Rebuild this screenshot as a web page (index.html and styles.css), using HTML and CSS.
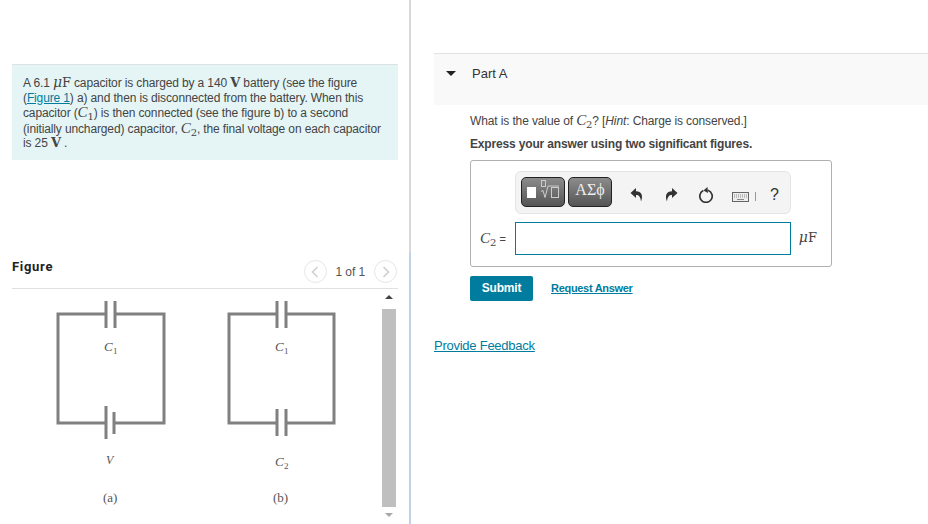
FILE: index.html
```html
<!DOCTYPE html>
<html lang="en">
<head>
    <meta charset="UTF-8">
    <title>Part A</title>
    <link rel="stylesheet" href="styles.css">
</head>
<body>
    <div class="left-pane">
        <div class="intro">
            A 6.1 <span class="mu">μ</span><span class="unit">F</span> capacitor is charged by a 140 <span class="unit bold">V</span> battery (see the figure<br>
            (<a href="#" class="link">Figure 1</a>) a) and then is disconnected from the battery. When this<br>
            capacitor (<span class="math">C</span><sub>1</sub>) is then connected (see the figure b) to a second<br>
            (initially uncharged) capacitor, <span class="math">C</span><sub>2</sub>, the final voltage on each capacitor<br>
            is 25 <span class="unit bold">V</span> .
        </div>

        <div class="figure-head">
            <span class="figure-title">Figure</span>
            <div class="pager">
                <span class="page-btn">
                    <svg width="8" height="12" viewBox="0 0 8 12"><path d="M6.5 1 1.5 6l5 5" fill="none" stroke="#d0d0d0" stroke-width="1.6"/></svg>
                </span>
                <span class="page-count">1 of 1</span>
                <span class="page-btn">
                    <svg width="8" height="12" viewBox="0 0 8 12"><path d="M1.5 1l5 5-5 5" fill="none" stroke="#d0d0d0" stroke-width="1.6"/></svg>
                </span>
            </div>
        </div>

        <div class="figure-body">
            <svg class="circuit" width="370" height="235" viewBox="12 289 370 235">
                <g fill="none" stroke="#808080" stroke-width="3">
                    <path d="M106 314H58V423H106M115 314H164V423H114"/>
                    <path d="M106 301V328M115 301V328M106 406V439M114 412V434"/>
                    <path d="M277 314H229V423H277M286 314H334V423H286"/>
                    <path d="M277 301V328M286 301V328M277 409V436M286 409V436"/>
                </g>
                <g class="fig-label">
                    <text x="104" y="351" font-style="italic" font-size="13">C</text>
                    <text x="113" y="354" font-size="9">1</text>
                    <text x="275" y="351" font-style="italic" font-size="13">C</text>
                    <text x="284" y="354" font-size="9">1</text>
                    <text x="106" y="464" font-style="italic" font-size="12">V</text>
                    <text x="275" y="466" font-style="italic" font-size="13">C</text>
                    <text x="284" y="469" font-size="9">2</text>
                    <text x="103" y="502" font-size="13">(a)</text>
                    <text x="273" y="502" font-size="13">(b)</text>
                </g>
            </svg>
            <div class="scrollbar">
                <span class="arrow-up"></span>
                <span class="thumb"></span>
                <span class="arrow-down"></span>
            </div>
        </div>
    </div>

    <div class="divider"></div>

    <div class="right-pane">
        <div class="part-head">
            <span class="caret"></span>
            <span class="part-title">Part A</span>
        </div>

        <div class="part-body">
            <p class="question">What is the value of <span class="math">C</span><sub>2</sub>? [<i>Hint</i>: Charge is conserved.]</p>
            <p class="instruction">Express your answer using two significant figures.</p>

            <div class="answer-box">
                <div class="toolbar">
                    <span class="tool-btn">
                        <svg width="36" height="24" viewBox="0 0 36 24">
                            <rect x="2" y="8" width="9" height="11" fill="#fff"/>
                            <path d="M16 12.500l2-1 2 7 3-11.500h11" fill="none" stroke="#ccc"/>
                            <rect x="16.500" y="1.500" width="4" height="6" fill="none" stroke="#ccc"/>
                            <rect x="26.500" y="8.500" width="7" height="10" fill="none" stroke="#ccc"/>
                        </svg>
                    </span>
                    <span class="tool-btn greek">ΑΣϕ</span>
                    <div class="tool-icons">
                        <svg width="14" height="14" viewBox="0 0 14 14"><path d="M6 0 .5 5 6 10V7C9 7 10.500 8.800 11 13.500 13.300 8 11.800 3.300 6 3.300Z" fill="#333"/></svg>
                        <svg width="14" height="14" viewBox="0 0 14 14"><path d="M8 0l5.500 5L8 10V7C5 7 3.500 8.800 3 13.500.7 8 2.200 3.300 8 3.300Z" fill="#333"/></svg>
                        <svg width="16" height="16" viewBox="0 0 16 16"><path d="M5.300 3.600A6.200 6.200 0 1 0 10 3.300" fill="none" stroke="#333" stroke-width="1.700"/><path d="M9.500 0 5.500 3.500 10 6Z" fill="#333"/></svg>
                        <span class="keys">
                            <svg width="17" height="10" viewBox="0 0 17 10"><rect x=".5" y=".5" width="16" height="9" fill="#eee" stroke="#666"/><path d="M2 3h13M2 5h13" stroke="#888" stroke-dasharray="1 1"/><path d="M5 7.500h7" stroke="#888"/></svg>
                            <span class="keys-sep"></span>
                        </span>
                        <span class="help">?</span>
                    </div>
                </div>
                <div class="answer-row">
                    <span class="answer-label"><span class="math">C</span><sub>2</sub> =</span>
                    <input class="answer-input" type="text">
                    <span class="answer-unit"><span class="mu">μ</span><span class="unit">F</span></span>
                </div>
            </div>

            <div class="actions">
                <button class="submit-btn">Submit</button>
                <a href="#" class="request-link">Request Answer</a>
            </div>
        </div>

        <a href="#" class="feedback-link">Provide Feedback</a>
    </div>
</body>
</html>
```

FILE: styles.css
```css
* {
    margin: 0;
    padding: 0;
    box-sizing: border-box;
}

body {
    font-family: "Liberation Sans", Arial, sans-serif;
    font-size: 12px;
    color: #444;
    background: #fff;
    display: flex;
    height: 524px;
    width: 928px;
    overflow: hidden;
}

a {
    color: #007c9e;
}

sub {
    font-size: 10px;
    line-height: 0;
    font-family: "DejaVu Serif", serif;
}

.math {
    font-family: "Liberation Serif", serif;
    font-style: italic;
    font-size: 15px;
}

.mu {
    font-family: "DejaVu Serif", serif;
    font-style: italic;
    font-size: 14px;
    line-height: 0;
}

.unit {
    font-family: "DejaVu Serif", serif;
    font-size: 13px;
    line-height: 0;
}

.bold {
    font-weight: bold;
}

/* left side */
.left-pane {
    width: 409px;
    padding: 64px 11px 0 12px;
    flex-shrink: 0;
}

.intro {
    height: 96px;
    background: #e5f5f6;
    border-top: 1px solid #dde3e3;
    padding: 11px 0 0 11px;
    line-height: 14.500px;
    letter-spacing: -.13px;
    white-space: nowrap;
}

.intro .link {
    text-decoration: underline;
}

.figure-head {
    margin-top: 93px;
    height: 36px;
    display: flex;
    justify-content: space-between;
    align-items: flex-start;
    border-bottom: 1px solid #e0e0e0;
}

.figure-title {
    font-family: Roboto, sans-serif;
    font-weight: bold;
    font-size: 13px;
    letter-spacing: .7px;
    line-height: 18px;
    margin-top: 5px;
    color: #222;
}

.pager {
    display: flex;
    align-items: center;
    gap: 9px;
    margin: 7px 1px 0 0;
}

.page-count {
    color: #555;
    letter-spacing: -.1px;
}

.page-btn {
    width: 23px;
    height: 23px;
    border: 1px solid #e6e6e6;
    border-radius: 50%;
    display: flex;
    align-items: center;
    justify-content: center;
}

.figure-body {
    display: flex;
}

.circuit {
    display: block;
    flex-shrink: 0;
}

.fig-label text {
    font-family: "Liberation Serif", serif;
    fill: #555;
}

.scrollbar {
    width: 14px;
    height: 235px;
    display: flex;
    flex-direction: column;
    align-items: center;
}

.arrow-up {
    margin-top: 6px;
    border: 4px solid transparent;
    border-top: 0;
    border-bottom: 4px solid #444;
}

.thumb {
    width: 14px;
    height: 198px;
    margin-top: 10px;
    background: #bfbfbf;
}

.arrow-down {
    margin-top: 6px;
    border: 4px solid transparent;
    border-bottom: 0;
    border-top: 4px solid #a8a8a8;
}

.divider {
    width: 2px;
    height: 524px;
    flex-shrink: 0;
    background: linear-gradient(#d8d8d8 252px, #c0d2e4 252px);
}

/* right side */
.right-pane {
    flex: 1;
    padding: 53px 0 0 23px;
}

.part-head {
    height: 52px;
    background: #f9f9f9;
    border-top: 1px solid #e2e2e2;
    display: flex;
    align-items: flex-start;
    padding: 11px 0 0 12px;
}

.caret {
    margin-top: 6px;
    border: 5px solid transparent;
    border-bottom: 0;
    border-top: 5px solid #222;
}

.part-title {
    margin-left: 16px;
    margin-top: 1px;
    font-size: 13px;
    color: #333;
}

.part-body {
    padding: 7px 0 0 36px;
}

.question {
    line-height: 17px;
    letter-spacing: -.12px;
}

.instruction {
    margin-top: 7px;
    line-height: 15px;
    font-weight: bold;
    letter-spacing: -.16px;
}

.answer-box {
    margin-top: 8px;
    width: 362px;
    height: 107px;
    border: 1px solid #b0b0b0;
    border-radius: 3px;
    padding: 10px 40px 0 44px;
}

.toolbar {
    height: 43px;
    background: #f4f4f4;
    border: 1px solid #e4e4e4;
    border-radius: 6px;
    display: flex;
    align-items: flex-start;
    gap: 3px;
    padding: 5px 0 0 5px;
}

.tool-btn {
    width: 44px;
    height: 30px;
    border: 1px solid #222;
    border-radius: 5px;
    background: linear-gradient(#8c8c8c, #555);
    display: flex;
    align-items: flex-start;
    justify-content: center;
    padding-top: 1px;
}

.greek {
    font-family: "Liberation Serif", serif;
    font-size: 16px;
    color: #eee;
    padding-top: 3px;
}

.tool-icons {
    margin-top: 6px;
    margin-left: 15px;
    height: 24px;
    display: flex;
    align-items: center;
    gap: 20px;
}

.keys {
    display: flex;
    align-items: center;
    gap: 6px;
    margin-left: -2px;
    margin-top: 3px;
}

.keys-sep {
    width: 1px;
    height: 9px;
    background: #999;
}

.help {
    font-size: 16px;
    color: #333;
    margin-left: -6px;
}

.answer-row {
    position: relative;
    margin-top: 8px;
    height: 33px;
}

.answer-label {
    position: absolute;
    left: -35px;
    top: 8px;
    white-space: nowrap;
    font-size: 11px;
}

.answer-unit {
    position: absolute;
    right: -26px;
    top: 9px;
}

.answer-input {
    display: block;
    width: 100%;
    height: 33px;
    border: 1px solid #007c9e;
    outline: none;
    background: #fff;
}

.actions {
    margin-top: 9px;
    display: flex;
    align-items: center;
    gap: 18px;
}

.submit-btn {
    width: 63px;
    height: 25px;
    border: none;
    border-radius: 2px;
    background: #007c9e;
    color: #fff;
    font-family: "Liberation Sans", Arial, sans-serif;
    font-size: 12px;
    font-weight: bold;
    letter-spacing: -.2px;
    padding-bottom: 1px;
}

.request-link {
    font-size: 11px;
    font-weight: bold;
    letter-spacing: -.3px;
    margin-top: -1px;
}

.feedback-link {
    display: inline-block;
    margin-top: 37px;
    font-size: 13px;
    line-height: 16px;
    letter-spacing: -.25px;
}
```
